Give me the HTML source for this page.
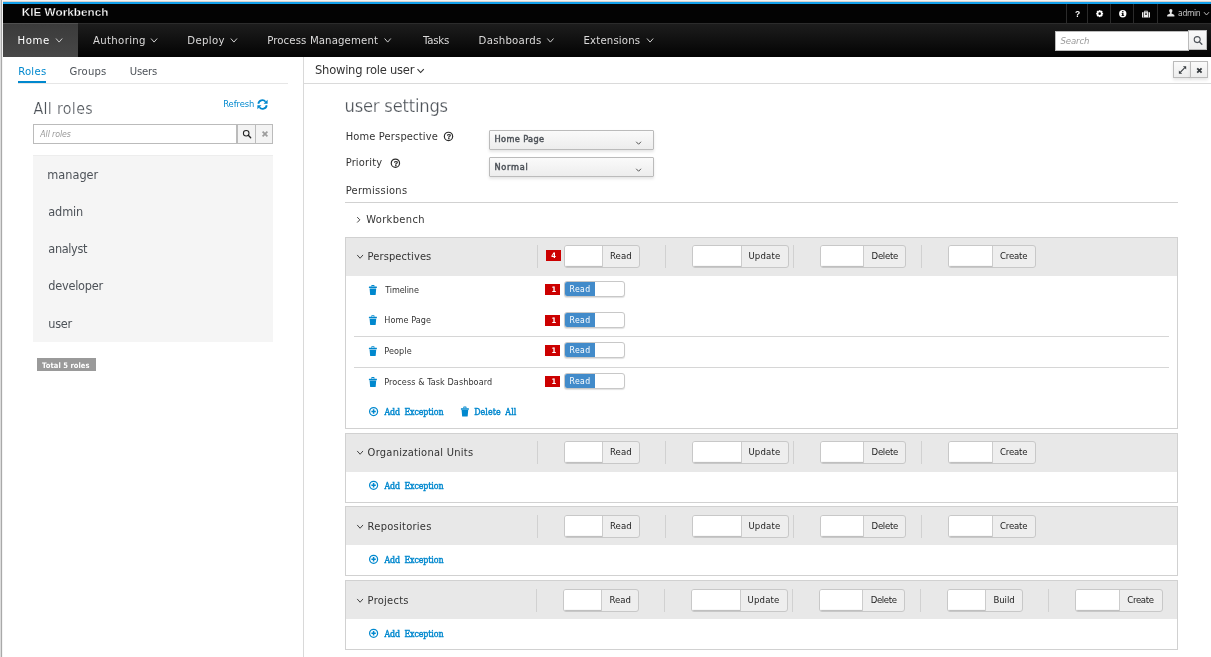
<!DOCTYPE html>
<html lang="en"><head><meta charset="utf-8"><title>KIE Workbench</title>
<style>
*{box-sizing:border-box}
html,body{margin:0;padding:0}
body{width:1211px;height:657px;overflow:hidden;background:#fff;position:relative;font-family:'DejaVu Sans Condensed','Liberation Sans',sans-serif;font-size:11.5px;color:#333}
#wrap{position:absolute;left:0;top:0;width:1211px;height:657px;will-change:transform}
.abs{position:absolute}
.t{position:absolute;white-space:nowrap;line-height:1}
svg{position:absolute;left:0;top:0;overflow:visible}
.sw{position:absolute;height:23px;border:1px solid #c8c8c8;border-radius:3px;background:#eee;overflow:hidden}
.sw i{position:absolute;left:0;top:0;height:100%;background:#fff;border-right:1px solid #ccc;box-shadow:inset 0 -2px 1px -1px rgba(0,0,0,.28)}
.ss{position:absolute;width:61px;height:16px;border:1px solid #c8c8c8;border-radius:3px;background:#fff;overflow:hidden;box-shadow:0 1px 1px rgba(0,0,0,.12)}
.ss i{position:absolute;left:0;top:0;width:30px;height:100%;background:#428bca}
</style></head><body><div id="wrap">
<header>
<div class="abs" style="left:0px;top:0px;width:1211px;height:2px;background:#f4f4f4"></div>
<div class="abs" style="left:3px;top:1px;width:1208px;height:1px;background:#d9d0cb"></div>
<div class="abs" style="left:3px;top:2px;width:1208px;height:2px;background:#13a0ea"></div>
<div class="abs" style="left:3px;top:4px;width:1208px;height:19px;background:#030303"></div>
<div class="abs" style="left:3px;top:23px;width:1208px;height:1px;background:#2c2c2c"></div>
<div class="abs" style="left:3px;top:23px;width:75px;height:1px;background:#505050"></div>
<div class="abs" style="left:3px;top:24px;width:1208px;height:33px;background:linear-gradient(#1d1d1d,#030303)"></div>
<div class="abs" style="left:3px;top:24px;width:75px;height:33px;background:linear-gradient(#3b3b3b,#474747)"></div>
<div class="abs" style="left:1066px;top:4px;width:1px;height:19px;background:#2b2b2b"></div>
<div class="abs" style="left:1087px;top:4px;width:1px;height:19px;background:#2b2b2b"></div>
<div class="abs" style="left:1110px;top:4px;width:1px;height:19px;background:#2b2b2b"></div>
<div class="abs" style="left:1133px;top:4px;width:1px;height:19px;background:#2b2b2b"></div>
<div class="abs" style="left:1157px;top:4px;width:1px;height:19px;background:#2b2b2b"></div>
<div class="abs" style="left:1055px;top:31px;width:134px;height:20px;background:#fff;border:1px solid #bbb"></div>
<div class="abs" style="left:1188px;top:30px;width:19px;height:20px;border:1px solid #bbb;background:linear-gradient(#fafafa,#ededed)"></div>
<svg width="1" height="1"><polyline points="56.00,38.50 59.10,42.10 62.20,38.50" fill="none" stroke="#d0d0d0" stroke-width="1.0"/></svg>
<svg width="1" height="1"><polyline points="151.00,38.50 154.10,42.10 157.20,38.50" fill="none" stroke="#d0d0d0" stroke-width="1.0"/></svg>
<svg width="1" height="1"><polyline points="230.80,38.50 233.90,42.10 237.00,38.50" fill="none" stroke="#d0d0d0" stroke-width="1.0"/></svg>
<svg width="1" height="1"><polyline points="384.60,38.50 387.70,42.10 390.80,38.50" fill="none" stroke="#d0d0d0" stroke-width="1.0"/></svg>
<svg width="1" height="1"><polyline points="547.30,38.50 550.40,42.10 553.50,38.50" fill="none" stroke="#d0d0d0" stroke-width="1.0"/></svg>
<svg width="1" height="1"><polyline points="647.00,38.50 650.10,42.10 653.20,38.50" fill="none" stroke="#d0d0d0" stroke-width="1.0"/></svg>
<svg width="1" height="1"><polyline points="1204.00,12.20 1206.50,15.00 1209.00,12.20" fill="none" stroke="#bbb" stroke-width="1"/></svg>
<svg width="1" height="1"><circle cx="1197.2" cy="39.6" r="3" fill="none" stroke="#4d5258" stroke-width="1.05"/><line x1="1199.45" y1="41.85" x2="1201.8500000000001" y2="44.25" stroke="#4d5258" stroke-width="1.3" stroke-linecap="round"/></svg>
<svg style="left:1095.9px;top:10.3px" width="7.3" height="7.3" viewBox="-4 -4 8 8"><g fill="#fff"><circle r="2.9"/><rect x="-1" y="-3.8" width="2" height="7.6"/><rect x="-1" y="-3.8" width="2" height="7.6" transform="rotate(45)"/><rect x="-1" y="-3.8" width="2" height="7.6" transform="rotate(90)"/><rect x="-1" y="-3.8" width="2" height="7.6" transform="rotate(135)"/></g><circle r="1.4" fill="#030303"/></svg>
<svg style="left:1118.7px;top:10.2px" width="7.5" height="7.5" viewBox="-4 -4 8 8"><circle r="3.9" fill="#fff"/><g fill="#030303"><rect x="-0.7" y="-0.9" width="1.5" height="3.2"/><rect x="-1.3" y="-0.9" width="1.4" height="0.8"/><rect x="-1.4" y="1.6" width="2.9" height="0.8"/><rect x="-0.7" y="-2.8" width="1.5" height="1.2"/></g></svg>
<svg style="left:1142px;top:10.3px" width="8" height="8" viewBox="0 0 8 8"><path d="M0 2.2h8v5.3h-8z M2.3 2.2v-1.5h3.4v1.5h-0.9v-0.7h-1.6v0.7z" fill="#eee"/><rect x="1.3" y="2.2" width="0.6" height="5.3" fill="#030303"/><rect x="6.1" y="2.2" width="0.6" height="5.3" fill="#030303"/><rect x="3.1" y="3.3" width="1.8" height="1.6" fill="#030303" opacity=".8"/></svg>
<svg style="left:1166.6px;top:9.4px" width="7.6" height="7.6" viewBox="0 0 8 8"><path d="M4 0c1.1 0 1.700.8 1.700 1.900 0 .9-.4 1.700-.9 2.100v.7l2.600 1.400c.3.2.4.5.4.8v.9h-7.600v-.9c0-.3.100-.6.400-.8l2.600-1.400v-.7c-.5-.4-.9-1.200-.9-2.100 0-1.100.6-1.900 1.700-1.900z" fill="#e6e6e6"/></svg>
<div class="t" id="t0" style="left:21.70px;top:5.90px;font-size:11.7px;color:#fff;font-weight:bold;font-family:'Liberation Sans',sans-serif;letter-spacing:0.05px;-webkit-text-stroke:0.3px #030303;">KIE Workbench</div>
<div class="t" id="t1" style="left:1075.00px;top:10.20px;font-size:8.5px;color:#fff;font-weight:bold;font-family:'Liberation Sans',sans-serif;">?</div>
<div class="t" id="t2" style="left:1178.10px;top:9.00px;font-size:8.6px;color:#c4c4c4;letter-spacing:-0.41px;">admin</div>
<div class="t" id="t3" style="left:17.60px;top:35.00px;font-size:11.3px;color:#fff;letter-spacing:0.55px;">Home</div>
<div class="t" id="t4" style="left:93.00px;top:35.00px;font-size:11.3px;color:#dbdada;letter-spacing:0.32px;">Authoring</div>
<div class="t" id="t5" style="left:187.30px;top:35.00px;font-size:11.3px;color:#dbdada;letter-spacing:0.34px;">Deploy</div>
<div class="t" id="t6" style="left:267.20px;top:35.00px;font-size:11.3px;color:#dbdada;letter-spacing:0.12px;">Process Management</div>
<div class="t" id="t7" style="left:423.00px;top:35.00px;font-size:11.3px;color:#dbdada;letter-spacing:-0.19px;">Tasks</div>
<div class="t" id="t8" style="left:478.60px;top:35.00px;font-size:11.3px;color:#dbdada;letter-spacing:0.25px;">Dashboards</div>
<div class="t" id="t9" style="left:583.50px;top:35.00px;font-size:11.3px;color:#dbdada;letter-spacing:0.16px;">Extensions</div>
<div class="t" id="t10" style="left:1060.50px;top:36.00px;font-size:9.5px;color:#999;font-style:italic;letter-spacing:-0.13px;">Search</div>
</header>
<aside>
<div class="abs" style="left:18px;top:83px;width:270px;height:1px;background:#e6e6e6"></div>
<div class="abs" style="left:18px;top:81px;width:28px;height:2px;background:#0088ce"></div>
<div class="abs" style="left:33px;top:124px;width:204px;height:20px;background:#fff;border:1px solid #bbb"></div>
<div class="abs" style="left:237px;top:124px;width:19px;height:20px;border:1px solid #bbb;background:#f3f3f3"></div>
<div class="abs" style="left:255px;top:124px;width:18px;height:20px;border:1px solid #bbb;background:#f3f3f3"></div>
<div class="abs" style="left:33px;top:155px;width:240px;height:187px;background:#f5f5f5;border-top:1px solid #ededed"></div>
<div class="abs" style="left:37px;top:358px;width:59px;height:13px;background:#9a9a9a"></div>
<svg width="1" height="1"><circle cx="246.2" cy="133.2" r="2.8" fill="none" stroke="#222" stroke-width="1.05"/><line x1="248.29999999999998" y1="135.29999999999998" x2="250.7" y2="137.7" stroke="#222" stroke-width="1.3" stroke-linecap="round"/></svg>
<svg style="left:256.9px;top:99.3px" width="11" height="11" viewBox="0 0 10.3 10.9"><g fill="#0088ce"><path d="M1.0 4.7A4.1 4.1 0 0 1 8.2 2.7" fill="none" stroke="#0088ce" stroke-width="1.8"/><path d="M10.2 0.8V4.8H6.2z"/></g><g fill="#0088ce" transform="rotate(180 5.15 5.45)"><path d="M1.0 4.7A4.1 4.1 0 0 1 8.2 2.7" fill="none" stroke="#0088ce" stroke-width="1.8"/><path d="M10.2 0.8V4.8H6.2z"/></g></svg>
<svg width="1" height="1"><path d="M262.6 131.6L267.4 136.4M267.4 131.6L262.6 136.4" stroke="#9c9c9c" stroke-width="1.7" fill="none"/></svg>
<div class="t" id="t11" style="left:18.20px;top:66.00px;font-size:11.2px;color:#0088ce;letter-spacing:0.27px;">Roles</div>
<div class="t" id="t12" style="left:69.50px;top:66.00px;font-size:11.2px;color:#4d5258;letter-spacing:0.18px;">Groups</div>
<div class="t" id="t13" style="left:129.80px;top:66.00px;font-size:11.2px;color:#4d5258;letter-spacing:-0.19px;">Users</div>
<div class="t" id="t14" style="left:33.50px;top:100.80px;font-size:15.8px;color:#4d5258;letter-spacing:0.34px;-webkit-text-stroke:0.22px #fff;">All roles</div>
<div class="t" id="t15" style="left:223.30px;top:99.40px;font-size:9.3px;color:#0088ce;letter-spacing:-0.09px;">Refresh</div>
<div class="t" id="t16" style="left:40.30px;top:129.90px;font-size:8.7px;color:#999;font-style:italic;letter-spacing:-0.09px;">All roles</div>
<div class="t" id="t17" style="left:47.30px;top:169.00px;font-size:12.6px;color:#4d5258;">manager</div>
<div class="t" id="t18" style="left:48.30px;top:205.70px;font-size:12.6px;color:#4d5258;letter-spacing:-0.13px;">admin</div>
<div class="t" id="t19" style="left:48.30px;top:242.50px;font-size:12.6px;color:#4d5258;letter-spacing:-0.35px;">analyst</div>
<div class="t" id="t20" style="left:48.30px;top:280.00px;font-size:12.6px;color:#4d5258;letter-spacing:-0.24px;">developer</div>
<div class="t" id="t21" style="left:48.30px;top:317.70px;font-size:12.6px;color:#4d5258;letter-spacing:-0.32px;">user</div>
<div class="t" id="t22" style="left:42.10px;top:361.60px;font-size:7.5px;color:#fff;font-weight:bold;letter-spacing:0.07px;">Total 5 roles</div>
</aside>
<main>
<div class="abs" style="left:303px;top:57px;width:1px;height:600px;background:#d9d9d9"></div>
<div class="abs" style="left:304px;top:83px;width:907px;height:1px;background:#dadada"></div>
<div class="abs" style="left:1173px;top:61px;width:18px;height:17px;border:1px solid #bbb;background:linear-gradient(#fafafa,#ededed);box-shadow:0 2px 3px rgba(3,3,3,.1)"></div>
<div class="abs" style="left:1190px;top:61px;width:18px;height:17px;border:1px solid #bbb;background:linear-gradient(#fafafa,#ededed);box-shadow:0 2px 3px rgba(3,3,3,.1)"></div>
<div class="abs" style="left:489px;top:130px;width:165px;height:20px;border:1px solid #bbb;background:linear-gradient(#fafafa,#ededed);box-shadow:0 2px 3px rgba(3,3,3,.1);border-radius:1px"></div>
<div class="abs" style="left:489px;top:157px;width:165px;height:20px;border:1px solid #bbb;background:linear-gradient(#fafafa,#ededed);box-shadow:0 2px 3px rgba(3,3,3,.1);border-radius:1px"></div>
<div class="abs" style="left:345px;top:202px;width:833px;height:1px;background:#d1d1d1"></div>
<div class="abs" style="left:345px;top:237px;width:833px;height:192px;border:1px solid #d1d1d1;background:#fff"></div>
<div class="abs" style="left:346px;top:238px;width:831px;height:38px;background:#e8e8e8"></div>
<div class="abs" style="left:537px;top:245px;width:1px;height:23px;background:#d1d1d1"></div>
<div class="sw" style="left:564px;top:245px;width:76px"><i style="width:38px"></i></div>
<div class="abs" style="left:665px;top:245px;width:1px;height:23px;background:#d1d1d1"></div>
<div class="sw" style="left:692px;top:245px;width:97px"><i style="width:49px"></i></div>
<div class="abs" style="left:793px;top:245px;width:1px;height:23px;background:#d1d1d1"></div>
<div class="sw" style="left:820px;top:245px;width:86px"><i style="width:43px"></i></div>
<div class="abs" style="left:921px;top:245px;width:1px;height:23px;background:#d1d1d1"></div>
<div class="sw" style="left:948px;top:245px;width:88px"><i style="width:44px"></i></div>
<div class="abs" style="left:345px;top:433px;width:833px;height:70px;border:1px solid #d1d1d1;background:#fff"></div>
<div class="abs" style="left:346px;top:434px;width:831px;height:38px;background:#e8e8e8"></div>
<div class="abs" style="left:537px;top:441px;width:1px;height:23px;background:#d1d1d1"></div>
<div class="sw" style="left:564px;top:441px;width:76px"><i style="width:38px"></i></div>
<div class="abs" style="left:665px;top:441px;width:1px;height:23px;background:#d1d1d1"></div>
<div class="sw" style="left:692px;top:441px;width:97px"><i style="width:49px"></i></div>
<div class="abs" style="left:793px;top:441px;width:1px;height:23px;background:#d1d1d1"></div>
<div class="sw" style="left:820px;top:441px;width:86px"><i style="width:43px"></i></div>
<div class="abs" style="left:921px;top:441px;width:1px;height:23px;background:#d1d1d1"></div>
<div class="sw" style="left:948px;top:441px;width:88px"><i style="width:44px"></i></div>
<div class="abs" style="left:345px;top:506px;width:833px;height:70px;border:1px solid #d1d1d1;background:#fff"></div>
<div class="abs" style="left:346px;top:507px;width:831px;height:38px;background:#e8e8e8"></div>
<div class="abs" style="left:537px;top:515px;width:1px;height:23px;background:#d1d1d1"></div>
<div class="sw" style="left:564px;top:515px;width:76px"><i style="width:38px"></i></div>
<div class="abs" style="left:665px;top:515px;width:1px;height:23px;background:#d1d1d1"></div>
<div class="sw" style="left:692px;top:515px;width:97px"><i style="width:49px"></i></div>
<div class="abs" style="left:793px;top:515px;width:1px;height:23px;background:#d1d1d1"></div>
<div class="sw" style="left:820px;top:515px;width:86px"><i style="width:43px"></i></div>
<div class="abs" style="left:921px;top:515px;width:1px;height:23px;background:#d1d1d1"></div>
<div class="sw" style="left:948px;top:515px;width:88px"><i style="width:44px"></i></div>
<div class="abs" style="left:345px;top:580px;width:833px;height:70px;border:1px solid #d1d1d1;background:#fff"></div>
<div class="abs" style="left:346px;top:581px;width:831px;height:38px;background:#e8e8e8"></div>
<div class="abs" style="left:536px;top:589px;width:1px;height:23px;background:#d1d1d1"></div>
<div class="sw" style="left:563px;top:589px;width:76px"><i style="width:38px"></i></div>
<div class="abs" style="left:664px;top:589px;width:1px;height:23px;background:#d1d1d1"></div>
<div class="sw" style="left:691px;top:589px;width:97px"><i style="width:49px"></i></div>
<div class="abs" style="left:792px;top:589px;width:1px;height:23px;background:#d1d1d1"></div>
<div class="sw" style="left:819px;top:589px;width:86px"><i style="width:43px"></i></div>
<div class="abs" style="left:920px;top:589px;width:1px;height:23px;background:#d1d1d1"></div>
<div class="sw" style="left:947px;top:589px;width:76px"><i style="width:38px"></i></div>
<div class="abs" style="left:1048px;top:589px;width:1px;height:23px;background:#d1d1d1"></div>
<div class="sw" style="left:1075px;top:589px;width:88px"><i style="width:44px"></i></div>
<div class="abs" style="left:545px;top:284px;width:15px;height:11px;background:#cc0000"></div>
<div class="ss" style="left:564px;top:281px"><i></i></div>
<div class="abs" style="left:545px;top:315px;width:15px;height:11px;background:#cc0000"></div>
<div class="ss" style="left:564px;top:312px"><i></i></div>
<div class="abs" style="left:545px;top:345px;width:15px;height:11px;background:#cc0000"></div>
<div class="ss" style="left:564px;top:342px"><i></i></div>
<div class="abs" style="left:545px;top:376px;width:15px;height:11px;background:#cc0000"></div>
<div class="ss" style="left:564px;top:373px"><i></i></div>
<div class="abs" style="left:546px;top:250px;width:15px;height:11px;background:#cc0000"></div>
<div class="abs" style="left:354px;top:336px;width:815px;height:1px;background:#d6d6d6"></div>
<div class="abs" style="left:354px;top:367px;width:815px;height:1px;background:#d6d6d6"></div>
<svg width="1" height="1"><polyline points="636.20,141.75 638.60,144.25 641.00,141.75" fill="none" stroke="#555" stroke-width="1"/></svg>
<svg width="1" height="1"><polyline points="636.20,168.75 638.60,171.25 641.00,168.75" fill="none" stroke="#555" stroke-width="1"/></svg>
<svg width="1" height="1"><polyline points="417.50,69.10 420.65,72.50 423.80,69.10" fill="none" stroke="#333" stroke-width="1.1"/></svg>
<svg width="1" height="1"><polyline points="357.2,217.1 359.8,219.8 357.2,222.5" fill="none" stroke="#3a3a3a" stroke-width="0.95"/></svg>
<svg width="1" height="1"><polyline points="357.20,254.95 360.10,258.25 363.00,254.95" fill="none" stroke="#444" stroke-width="1"/></svg>
<svg width="1" height="1"><circle cx="373.6" cy="411.5" r="4" fill="none" stroke="#0088ce" stroke-width="1.25"/><path d="M371.4 411.5h4.4M373.6 409.3v4.4" stroke="#0088ce" stroke-width="1.5" fill="none"/></svg>
<svg width="1" height="1"><polyline points="357.20,450.95 360.10,454.25 363.00,450.95" fill="none" stroke="#444" stroke-width="1"/></svg>
<svg width="1" height="1"><circle cx="373.6" cy="485.3" r="4" fill="none" stroke="#0088ce" stroke-width="1.25"/><path d="M371.4 485.3h4.4M373.6 483.1v4.4" stroke="#0088ce" stroke-width="1.5" fill="none"/></svg>
<svg width="1" height="1"><polyline points="357.20,524.95 360.10,528.25 363.00,524.95" fill="none" stroke="#444" stroke-width="1"/></svg>
<svg width="1" height="1"><circle cx="373.6" cy="559.3" r="4" fill="none" stroke="#0088ce" stroke-width="1.25"/><path d="M371.4 559.3h4.4M373.6 557.0999999999999v4.4" stroke="#0088ce" stroke-width="1.5" fill="none"/></svg>
<svg width="1" height="1"><polyline points="357.20,598.95 360.10,602.25 363.00,598.95" fill="none" stroke="#444" stroke-width="1"/></svg>
<svg width="1" height="1"><circle cx="373.6" cy="633.3" r="4" fill="none" stroke="#0088ce" stroke-width="1.25"/><path d="M371.4 633.3h4.4M373.6 631.0999999999999v4.4" stroke="#0088ce" stroke-width="1.5" fill="none"/></svg>
<svg width="1" height="1"><g fill="#0088ce"><path d="M371.29999999999995 286.6v-1.0q0-.6.6-.6h2q.6 0 .6.6v1.0h-.9v-.7h-1.4v.7z"/><rect x="368.9" y="286.6" width="8" height="1.5" rx=".3"/><path d="M369.59999999999997 288.5h6.6l-.5 5.9q0 .5-.6.5h-4.400q-.6 0-.6-.5z"/></g></svg>
<svg width="1" height="1"><g fill="#0088ce"><path d="M371.29999999999995 316.8v-1.0q0-.6.6-.6h2q.6 0 .6.6v1.0h-.9v-.7h-1.4v.7z"/><rect x="368.9" y="316.8" width="8" height="1.5" rx=".3"/><path d="M369.59999999999997 318.7h6.6l-.5 5.9q0 .5-.6.5h-4.400q-.6 0-.6-.5z"/></g></svg>
<svg width="1" height="1"><g fill="#0088ce"><path d="M371.29999999999995 347.8v-1.0q0-.6.6-.6h2q.6 0 .6.6v1.0h-.9v-.7h-1.4v.7z"/><rect x="368.9" y="347.8" width="8" height="1.5" rx=".3"/><path d="M369.59999999999997 349.7h6.6l-.5 5.9q0 .5-.6.5h-4.400q-.6 0-.6-.5z"/></g></svg>
<svg width="1" height="1"><g fill="#0088ce"><path d="M371.29999999999995 378.70000000000005v-1.0q0-.6.6-.6h2q.6 0 .6.6v1.0h-.9v-.7h-1.4v.7z"/><rect x="368.9" y="378.70000000000005" width="8" height="1.5" rx=".3"/><path d="M369.59999999999997 380.6h6.6l-.5 5.9q0 .5-.6.5h-4.400q-.6 0-.6-.5z"/></g></svg>
<svg width="1" height="1"><g fill="#0088ce"><path d="M463.29999999999995 408.20000000000005v-1.0q0-.6.6-.6h2q.6 0 .6.6v1.0h-.9v-.7h-1.4v.7z"/><rect x="460.9" y="408.20000000000005" width="8" height="1.5" rx=".3"/><path d="M461.59999999999997 410.1h6.6l-.5 5.9q0 .5-.6.5h-4.400q-.6 0-.6-.5z"/></g></svg>
<svg width="1" height="1"><path d="M1197.2 68.3L1201.6000000000001 72.7M1201.6000000000001 68.3L1197.2 72.7" stroke="#363b3f" stroke-width="1.8" fill="none"/></svg>
<svg width="1" height="1"><g fill="#363b3f" stroke="none"><path d="M1186.2 66.2v3.3l-3.3-3.3z"/><path d="M1178.9 73.800v-3.300l3.300 3.300z"/></g><path d="M1184.6 67.800L1180.5 72.200" stroke="#363b3f" stroke-width="1.1"/></svg>
<svg width="1" height="1"><circle cx="448.5" cy="136.4" r="4.15" fill="none" stroke="#2b2b2b" stroke-width="1.2"/></svg>
<svg width="1" height="1"><circle cx="395.4" cy="163.2" r="4.15" fill="none" stroke="#2b2b2b" stroke-width="1.2"/></svg>
<div class="t" id="t23" style="left:315.00px;top:64.00px;font-size:12.8px;color:#333;letter-spacing:-0.23px;">Showing role user</div>
<div class="t" id="t24" style="left:344.50px;top:96.60px;font-size:18.2px;color:#4d5258;letter-spacing:-0.21px;-webkit-text-stroke:0.25px #fff;">user settings</div>
<div class="t" id="t25" style="left:345.70px;top:131.00px;font-size:11px;color:#333;letter-spacing:0.16px;">Home Perspective</div>
<div class="t" id="t26" style="left:345.70px;top:157.20px;font-size:11px;color:#333;letter-spacing:0.17px;">Priority</div>
<div class="t" id="t27" style="left:345.70px;top:185.00px;font-size:11px;color:#333;letter-spacing:0.29px;">Permissions</div>
<div class="t" id="t28" style="left:494.50px;top:134.90px;font-size:8.2px;color:#4d5258;font-family:'DejaVu Sans','Liberation Sans',sans-serif;letter-spacing:0.37px;-webkit-text-stroke:0.45px #4d5258;">Home Page</div>
<div class="t" id="t29" style="left:494.50px;top:162.60px;font-size:8.2px;color:#4d5258;font-family:'DejaVu Sans','Liberation Sans',sans-serif;letter-spacing:0.71px;-webkit-text-stroke:0.45px #4d5258;">Normal</div>
<div class="t" id="t30" style="left:366.30px;top:214.10px;font-size:11px;color:#333;letter-spacing:0.35px;">Workbench</div>
<div class="t" id="t31" style="left:367.60px;top:251.00px;font-size:11px;color:#333;letter-spacing:0.11px;">Perspectives</div>
<div class="t" id="t32" style="left:610.00px;top:250.80px;font-size:9.5px;color:#222;letter-spacing:0.06px;">Read</div>
<div class="t" id="t33" style="left:748.40px;top:250.80px;font-size:9.5px;color:#222;letter-spacing:0.16px;">Update</div>
<div class="t" id="t34" style="left:871.60px;top:250.80px;font-size:9.5px;color:#222;letter-spacing:-0.29px;">Delete</div>
<div class="t" id="t35" style="left:1000.00px;top:250.80px;font-size:9.5px;color:#222;letter-spacing:-0.18px;">Create</div>
<div class="t" id="t36" style="left:384.50px;top:407.80px;font-size:8.8px;color:#0088ce;font-family:'DejaVu Serif Condensed','DejaVu Serif','Liberation Serif',serif;letter-spacing:-0.11px;word-spacing:2px;-webkit-text-stroke:0.4px #0088ce;">Add Exception</div>
<div class="t" id="t37" style="left:367.60px;top:447.00px;font-size:11px;color:#333;letter-spacing:0.26px;">Organizational Units</div>
<div class="t" id="t38" style="left:610.00px;top:446.80px;font-size:9.5px;color:#222;letter-spacing:0.06px;">Read</div>
<div class="t" id="t39" style="left:748.40px;top:446.80px;font-size:9.5px;color:#222;letter-spacing:0.16px;">Update</div>
<div class="t" id="t40" style="left:871.60px;top:446.80px;font-size:9.5px;color:#222;letter-spacing:-0.29px;">Delete</div>
<div class="t" id="t41" style="left:1000.00px;top:446.80px;font-size:9.5px;color:#222;letter-spacing:-0.18px;">Create</div>
<div class="t" id="t42" style="left:384.50px;top:481.50px;font-size:8.8px;color:#0088ce;font-family:'DejaVu Serif Condensed','DejaVu Serif','Liberation Serif',serif;letter-spacing:-0.11px;word-spacing:2px;-webkit-text-stroke:0.4px #0088ce;">Add Exception</div>
<div class="t" id="t43" style="left:367.60px;top:521.00px;font-size:11px;color:#333;letter-spacing:0.28px;">Repositories</div>
<div class="t" id="t44" style="left:610.00px;top:520.80px;font-size:9.5px;color:#222;letter-spacing:0.06px;">Read</div>
<div class="t" id="t45" style="left:748.40px;top:520.80px;font-size:9.5px;color:#222;letter-spacing:0.16px;">Update</div>
<div class="t" id="t46" style="left:871.60px;top:520.80px;font-size:9.5px;color:#222;letter-spacing:-0.29px;">Delete</div>
<div class="t" id="t47" style="left:1000.00px;top:520.80px;font-size:9.5px;color:#222;letter-spacing:-0.18px;">Create</div>
<div class="t" id="t48" style="left:384.50px;top:555.50px;font-size:8.8px;color:#0088ce;font-family:'DejaVu Serif Condensed','DejaVu Serif','Liberation Serif',serif;letter-spacing:-0.11px;word-spacing:2px;-webkit-text-stroke:0.4px #0088ce;">Add Exception</div>
<div class="t" id="t49" style="left:367.60px;top:595.00px;font-size:11px;color:#333;letter-spacing:0.28px;">Projects</div>
<div class="t" id="t50" style="left:609.40px;top:594.80px;font-size:9.5px;color:#222;letter-spacing:0.03px;">Read</div>
<div class="t" id="t51" style="left:747.60px;top:594.80px;font-size:9.5px;color:#222;letter-spacing:0.14px;">Update</div>
<div class="t" id="t52" style="left:870.70px;top:594.80px;font-size:9.5px;color:#222;letter-spacing:-0.37px;">Delete</div>
<div class="t" id="t53" style="left:993.50px;top:594.80px;font-size:9.5px;color:#222;letter-spacing:-0.08px;">Build</div>
<div class="t" id="t54" style="left:1127.30px;top:594.80px;font-size:9.5px;color:#222;letter-spacing:-0.34px;">Create</div>
<div class="t" id="t55" style="left:384.50px;top:629.50px;font-size:8.8px;color:#0088ce;font-family:'DejaVu Serif Condensed','DejaVu Serif','Liberation Serif',serif;letter-spacing:-0.11px;word-spacing:2px;-webkit-text-stroke:0.4px #0088ce;">Add Exception</div>
<div class="t" id="t56" style="left:474.20px;top:407.80px;font-size:8.8px;color:#0088ce;font-family:'DejaVu Serif Condensed','DejaVu Serif','Liberation Serif',serif;letter-spacing:0.08px;word-spacing:2px;-webkit-text-stroke:0.4px #0088ce;">Delete All</div>
<div class="t" id="t57" style="left:385.30px;top:286.00px;font-size:9px;color:#333;letter-spacing:-0.12px;">Timeline</div>
<div class="t" id="t58" style="left:551.50px;top:286.00px;font-size:7.6px;color:#fff;font-weight:bold;">1</div>
<div class="t" id="t59" style="left:569.60px;top:284.90px;font-size:8.6px;color:#fff;letter-spacing:0.37px;">Read</div>
<div class="t" id="t60" style="left:384.30px;top:316.20px;font-size:9px;color:#333;letter-spacing:0.07px;">Home Page</div>
<div class="t" id="t61" style="left:551.50px;top:317.00px;font-size:7.6px;color:#fff;font-weight:bold;">1</div>
<div class="t" id="t62" style="left:569.60px;top:315.90px;font-size:8.6px;color:#fff;letter-spacing:0.37px;">Read</div>
<div class="t" id="t63" style="left:384.30px;top:347.20px;font-size:9px;color:#333;letter-spacing:0.10px;">People</div>
<div class="t" id="t64" style="left:551.50px;top:347.00px;font-size:7.6px;color:#fff;font-weight:bold;">1</div>
<div class="t" id="t65" style="left:569.60px;top:345.90px;font-size:8.6px;color:#fff;letter-spacing:0.37px;">Read</div>
<div class="t" id="t66" style="left:384.30px;top:378.10px;font-size:9px;color:#333;letter-spacing:0.08px;">Process &amp; Task Dashboard</div>
<div class="t" id="t67" style="left:551.50px;top:378.00px;font-size:7.6px;color:#fff;font-weight:bold;">1</div>
<div class="t" id="t68" style="left:569.60px;top:376.90px;font-size:8.6px;color:#fff;letter-spacing:0.37px;">Read</div>
<div class="t" id="t69" style="left:551.30px;top:252.30px;font-size:7.6px;color:#fff;font-weight:bold;">4</div>
<div class="t" id="t70" style="left:446.80px;top:132.90px;font-size:7.2px;color:#222;font-weight:bold;font-family:'Liberation Sans',sans-serif;-webkit-text-stroke:0.25px #222;">?</div>
<div class="t" id="t71" style="left:393.70px;top:159.70px;font-size:7.2px;color:#222;font-weight:bold;font-family:'Liberation Sans',sans-serif;-webkit-text-stroke:0.25px #222;">?</div>
</main>
<div class="abs" style="left:0px;top:0px;width:1px;height:657px;background:#dcdcdc"></div>
<div class="abs" style="left:1px;top:0px;width:1px;height:657px;background:#a9a9a9"></div>
<div class="abs" style="left:2px;top:0px;width:1px;height:657px;background:#f4f4f4"></div>
</div></body></html>
